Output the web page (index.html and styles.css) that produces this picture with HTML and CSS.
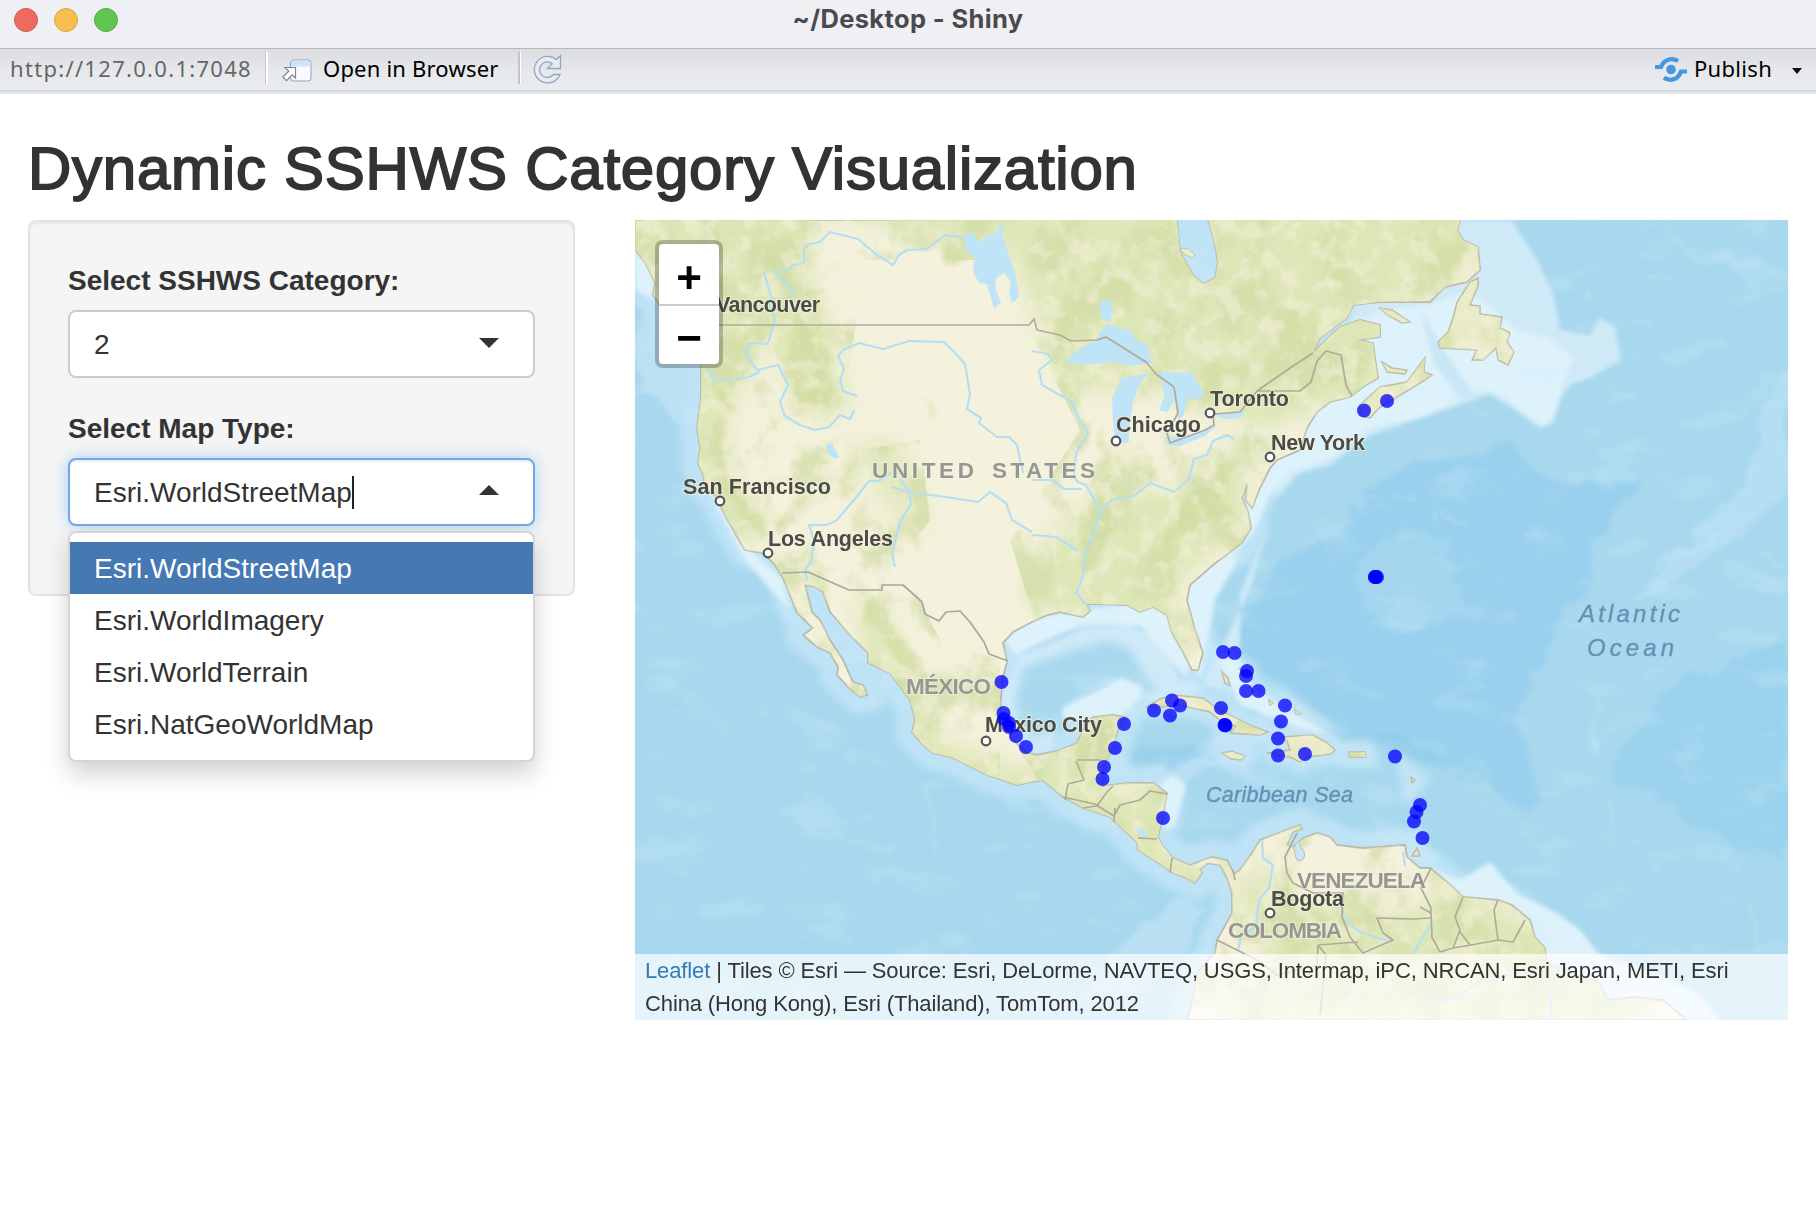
FILE: index.html
```html
<!DOCTYPE html>
<html lang="en">
<head>
<meta charset="utf-8">
<title>~/Desktop - Shiny</title>
<link rel="stylesheet" href="styles.css">
</head>
<body>
<header class="titlebar">
  <div class="lights"><span class="light red"></span><span class="light yellow"></span><span class="light green"></span></div>
  <div class="window-title">~/Desktop - Shiny</div>
</header>
<nav class="toolbar">
  <span class="url">http://127.0.0.1:7048</span>
  <span class="sep"></span>
  <svg class="open-icon" width="30" height="24" viewBox="0 0 30 24">
    <rect x="8.500" y="1" width="20.500" height="21" rx="3" fill="#f7faff" stroke="#8fa3b8"/>
    <path d="M9 7.500V4q0-2.500 2.500-2.500h14.500q2.500 0 2.500 2.500v3.500z" fill="#cfe3fb"/>
    <path d="M3 8.500h10.500v10.500l-3.200-3.200-5.800 5.800-3.600-3.600 5.800-5.800z" fill="#fff" stroke="#7c8794" stroke-width="1.200"/>
  </svg>
  <span class="open">Open in Browser</span>
  <span class="sep second"></span>
  <svg class="reload" width="30" height="31" viewBox="0 0 30 31">
    <path d="M28.500 1.500V14.500H15.500l4.800-4.800A7.800 7.800 0 1 0 21.500 20.500h6.500A13.300 13.300 0 1 1 24.300 5.500z" fill="#e4ecfa" stroke="#98a5b8" stroke-width="1.300"/>
  </svg>
  <svg class="publish-icon" width="32" height="26" viewBox="0 0 32 26">
    <circle cx="16" cy="12.500" r="4.800" fill="#4497e3"/>
    <path d="M0 10H6C9 2 17 .5 23 4M32 14.500H26C23 23.500 14 24.500 9 20.500" fill="none" stroke="#4497e3" stroke-width="4.200"/>
  </svg>
  <span class="publish">Publish</span>
  <span class="caret"></span>
</nav>

<main class="page">
  <h2>Dynamic SSHWS Category Visualization</h2>
  <div class="columns">
    <form class="well">
      <label>Select SSHWS Category:</label>
      <div class="select"><span class="value">2</span><span class="arrow down"></span></div>
      <label>Select Map Type:</label>
      <div class="select focus"><span class="value">Esri.WorldStreetMap</span><span class="cursor"></span><span class="arrow up"></span>
        <ul class="dropdown">
          <li class="active">Esri.WorldStreetMap</li>
          <li>Esri.WorldImagery</li>
          <li>Esri.WorldTerrain</li>
          <li>Esri.NatGeoWorldMap</li>
        </ul>
      </div>
    </form>

    <section class="map">
      <svg class="tiles" width="1153" height="800" viewBox="635 220 1153 800">
        <defs>
          <path id="land" d="M635 220V250L645 262 655 282 653 295 662 308 690 330 701 365 701 398 697 428 700 448 698 463 703 475 705 485 717 498 725 515 740 542 745 550 763 553 775 565 783 578 790 595 797 613 813 628 803 635 817 647 830 653 838 667 837 675 849 688 860 697 867 695 863 685 853 682 843 660 830 640 820 620 812 612 809 600 805 585 813 586 823 592 830 612 837 620 852 637 868 653 868 663 890 673 910 700 915 720 912 732 922 744 933 753 953 758 987 775 1017 785 1030 782 1043 780 1063 797 1083 808 1110 817 1124 830 1137 842 1138 850 1157 862 1173 873 1182 876 1195 883 1202 873 1200 869 1208 863 1220 865 1227 878 1232 893 1232 913 1217 940 1215 953 1197 973 1193 997 1187 1020H1687L1663 1000 1633 997 1607 1001 1600 983 1583 977 1547 963 1545 948 1535 937 1530 920 1512 905 1498 900 1463 897 1448 883 1430 868 1420 868 1407 857 1405 845 1363 848 1337 845 1330 837 1317 833 1303 838 1293 847 1287 845 1293 832 1302 829 1300 825 1287 830 1260 840 1252 853 1240 870 1234 874 1227 860 1212 857 1190 865 1173 858 1162 845 1158 837 1163 813 1167 793 1153 783 1130 783 1112 785 1102 787 1103 767 1113 747 1118 730 1125 717 1113 715 1093 717 1085 727 1077 743 1057 751 1037 755 1027 753 1013 740 1000 713 1002 680 1007 662 1003 643 1013 632 1030 623 1047 615 1060 612 1083 617 1090 611 1086 604 1097 604 1127 605 1140 612 1153 607 1167 615 1172 633 1182 650 1192 670 1198 670 1203 653 1195 630 1187 600 1190 585 1213 565 1230 552 1242 543 1251 528 1248 512 1242 498 1247 484 1246 500 1252 508 1260 488 1270 468 1277 460 1300 450 1307 428 1317 412 1330 402 1350 397 1363 387 1378 378 1375 358 1373 343 1357 340 1380 337 1380 325 1360 320 1340 327 1326 340 1313 353 1320 338 1347 318 1353 305 1380 302 1430 302 1445 287 1467 282 1480 270 1478 247 1463 240 1457 230 1460 220H1208L1213 235 1218 262 1215 278 1203 284 1193 275 1180 252 1177 220Z"/>
          <path id="isles" d="M1360 405L1380 387 1407 382 1418 367 1425 358 1424 372 1432 375 1420 383 1397 397 1380 407 1370 418 1362 416ZM1382 362l10 6 15 2-2 4-18-2zM1380 308l12 2 18 12-8 1-15-8zM1478 278L1478 286 1470 305 1480 306 1480 314 1502 317 1500 328 1510 333 1507 342 1514 352 1508 365 1498 360 1496 348 1483 360 1472 360 1477 350 1440 348 1438 342 1448 332 1453 318 1457 302 1470 282ZM1147 707L1160 699 1173 695 1203 698 1216 708 1230 715 1250 725 1268 732 1260 735 1230 733 1236 726 1222 722 1210 712 1180 705 1160 707ZM1283 737L1295 736 1313 735 1326 742 1335 750 1331 754 1307 757 1300 762 1290 757 1267 753 1290 750 1287 741ZM1222 753l10-2 13 5-4 4-10-1zM1349 752h16l1 5h-17zM1222 672l6 6 2 8-5-3zM1411 777l4 3-3 3zM1417 848l3 8-8 0zM1240 669l5 2-1 3zM1269 700l4 3-3 2zM1295 710l5 4-4 0z"/>
          <clipPath id="landclip"><use href="#land"/><use href="#isles"/></clipPath>
          <filter id="b30" x="-20%" y="-20%" width="140%" height="140%"><feGaussianBlur stdDeviation="11"/></filter>
          <filter id="b5" x="-10%" y="-10%" width="120%" height="120%"><feGaussianBlur stdDeviation="4"/></filter>
          <filter id="b1" x="-10%" y="-10%" width="120%" height="120%"><feGaussianBlur stdDeviation="2.200"/></filter>
          <filter id="shore" x="-10%" y="-10%" width="120%" height="120%">
            <feTurbulence type="fractalNoise" baseFrequency=".03" numOctaves="4" seed="5" result="t"/>
            <feDisplacementMap in="SourceGraphic" in2="t" scale="26" xChannelSelector="R" yChannelSelector="G" result="d"/>
            <feGaussianBlur in="d" stdDeviation="2"/>
          </filter>
          <filter id="relief" x="0" y="0" width="100%" height="100%" color-interpolation-filters="sRGB">
            <feTurbulence type="fractalNoise" baseFrequency=".022 .018" numOctaves="6" seed="8"/>
            <feColorMatrix values="0 0 0 0 .82  0 0 0 0 .865  0 0 0 0 .65  5 0 0 0 -2.350" result="n"/>
            <feComposite in="n" in2="SourceAlpha" operator="in"/>
          </filter>
          <filter id="cream" x="0" y="0" width="100%" height="100%" color-interpolation-filters="sRGB">
            <feTurbulence type="fractalNoise" baseFrequency=".05" numOctaves="6" seed="31"/>
            <feColorMatrix values="0 0 0 0 .955  0 0 0 0 .94  0 0 0 0 .85  0 4.500 0 0 -2.100" result="n"/>
            <feComposite in="n" in2="SourceAlpha" operator="in"/>
          </filter>
          <filter id="swell" x="0" y="0" width="100%" height="100%" color-interpolation-filters="sRGB">
            <feTurbulence type="fractalNoise" baseFrequency=".014 .03" numOctaves="4" seed="12"/>
            <feColorMatrix values="0 0 0 0 .82  0 0 0 0 .93  0 0 0 0 .98  0 4 0 0 -2.250"/>
          </filter>
        </defs>

        <!-- sea floor -->
        <rect x="635" y="220" width="1153" height="800" fill="#a8d8ee"/>
        <g filter="url(#shore)">
          <path fill="#99d0ed" d="M1240 650L1248 605 1285 560 1340 530 1380 480 1440 455 1480 452 1508 440 1525 465 1575 478 1600 488 1645 486 1610 520 1590 570 1560 620 1530 680 1520 740 1540 800 1530 810 1460 780 1410 745 1340 730 1290 700Z"/>
          <path fill="#9bd2ed" d="M1660 690L1710 670 1788 640V860L1700 830 1650 790 1610 780Z"/>
          <path fill="#a3d6ee" d="M1355 560l50-35 40 20 20 60-50 30-50-20z"/>
          <path fill="#b9dff2" d="M1788 370L1760 420 1740 490 1690 540 1630 600 1660 590 1730 540 1788 500Z" opacity=".85"/>
          <path fill="#b9dff2" d="M1660 220L1690 250 1788 268V280L1750 270 1690 262Z" opacity=".5"/>
          <path fill="#bce1f2" d="M635 300L690 330 690 430 660 400 635 400Z"/>
          <path fill="#c5e5f5" d="M1170 900L1120 950 1080 990 1100 1010 1180 960 1210 910ZM1150 760L1090 790 1180 790 1160 830 1200 770 1250 750Z" opacity=".6"/>
          <path fill="#8fcbea" d="M1290 730L1400 732 1440 760 1425 765 1380 742 1300 742ZM1140 752L1260 738 1220 752 1120 780ZM1020 800L1080 820 1120 840 1070 815Z" opacity=".6"/>
        </g>
        <use href="#land" fill="none" stroke="#bfe3f6" stroke-width="34" stroke-linejoin="round" filter="url(#b5)"/>
        <use href="#isles" fill="none" stroke="#c9e8f8" stroke-width="22" filter="url(#b5)" opacity=".8"/>
        <g filter="url(#b1)">
          <path fill="#cfe9f7" d="M1460 220H1512L1540 265 1555 300 1560 330 1590 335 1600 318 1615 328 1621 360 1590 378 1570 385 1560 400 1553 424 1540 428 1515 410 1490 394 1460 405 1415 420 1370 435 1330 465 1298 474 1275 500 1262 540 1240 595 1240 645 1222 690 1180 680 1160 640 1130 625 1080 630 1020 655 1000 700 1010 740 1030 755 1050 752 1060 712 1100 685 1130 680 1140 700 1170 700 1200 690 1250 590 1290 440 1360 300Z"/>
          <path fill="#def2fb" d="M1350 330L1380 310 1430 305 1470 290 1520 332 1550 338 1573 358 1562 385 1555 415 1542 426 1500 395 1480 390 1420 418 1370 428 1330 460 1295 470 1270 495 1255 530 1230 560 1210 590 1200 650 1185 675 1165 655 1140 625 1080 625 1015 655 1005 640 1030 618 1160 600 1250 500 1300 420ZM1160 785L1172 775 1186 785 1175 825 1165 830ZM1182 620L1200 570 1240 555 1215 600 1200 680zM1430 868L1460 880 1490 862 1518 895 1555 912 1580 930 1600 955 1660 975 1700 995 1720 1020H1680L1540 970ZM1240 705L1215 650 1240 660 1255 690 1330 735 1300 728ZM635 250L655 270V300L635 290ZM697 440L715 505 745 560 790 610 783 580 745 545z"/>
          <path fill="#bfe1f4" d="M1420 310L1450 360 1475 395 1460 398 1435 365z" opacity=".7"/>
        </g>
        <g filter="url(#b5)">
          <path fill="#a8d8ee" d="M1016 700L1024 668 1060 655 1105 640 1130 650 1146 678 1160 690 1140 692 1110 678 1075 702 1055 728 1032 738 1018 722Z"/>
        </g>
        <path fill="#def2fb" filter="url(#b1)" d="M1064 722L1062 708 1090 694 1122 678 1142 686 1140 698 1122 716z"/>
        <rect x="635" y="220" width="1153" height="800" filter="url(#swell)" opacity=".28"/>
        <!-- ridges on the ocean floor -->
        <g fill="none" stroke="#d3ecf8" stroke-width="2" opacity=".55" filter="url(#shore)">
          <path d="M1520 530l12 8 4-10 8 10M1536 543l15 2 12-6M1445 510l10 12 8-5M1390 492l20 8 4-6M1755 548l14 10M1770 565h18M1640 278l18-5 10 8M1580 300l6-14 4 12M1450 772l28 8M1530 790l35 4M1598 690l-6 60M1604 800l8 30M850 845l45 4M925 780l10 70M1690 1000l20 20M1745 905l20 60M1430 500l8 20M1650 570l30-20 40-15"/>
        </g>

        <!-- land -->
        <use href="#land" fill="#f4f2dd" stroke="#b9b9a8" stroke-width="1.800"/>
        <use href="#isles" fill="#e9ebc8" stroke="#bdbca4" stroke-width="1.500"/>
        <g clip-path="url(#landclip)">
          <g filter="url(#b30)" fill="#dde6b6">
            <path d="M635 210H820L805 270 830 330 850 410 810 420 760 330 740 380 725 450 760 520 770 550 740 540 690 460 690 350 635 270Z"/>
            <path d="M830 205H1480V270L1390 300 1380 390 1290 420 1240 450 1190 490 1100 500 1075 580 1160 590 1230 540 1250 450 1290 440 1160 390 1080 390 1040 330 1010 250 830 215Z"/>
            <path d="M1060 520L1100 500 1230 470 1260 500 1170 590 1200 650 1180 650 1060 610 1020 600Z"/>
            <path d="M845 445L900 440 930 530 900 525z" opacity=".8"/>
            <path d="M850 600L880 610 915 680 920 730 1020 770 1060 750 1080 800 1010 800 900 760ZM1080 720h40v60l60 20v60l60 30-20 30-60-40-80-50z"/>
            <path d="M1260 850L1240 900 1270 950 1220 1020H1650L1540 930 1430 870 1430 910 1340 905 1290 930Z"/>
          </g>
          <g fill="#cdd99c" opacity=".6" filter="url(#shore)">
            <path d="M715 375l14 3-8 85 45 60 0 20-36-45-20-45zM795 310l25 15 20 80-40 10-15-60zM865 600l15 0 25 50 18 30 0 15-30-35zM760 250l30-5 10 50-20 5zM945 245l20 10-12 10-10-5zM1100 425l20 80-20 50-20 20zM1170 520l60-60 10 0-40 70-40 20zM905 520l14 25-6 8zM1085 730h25l-5 40-25 5zM1295 850l-14 50 12 40zM850 540l40 8-10 8zM925 395l12 16-4 4z"/>
          </g>
          <path filter="url(#relief)" opacity=".75" d="M635 220H830L860 300 840 420 860 450 920 440 930 520 900 560 940 640 1000 660V780H900L700 540 635 300ZM830 220H1490V440H1290V680H1150L1040 640 1010 540 1080 430 1030 330 1010 260H830ZM990 700H1700V1020H1180ZM1440 280h90v90h-90z"/>
          <path filter="url(#cream)" opacity=".55" d="M635 220H870V700H700ZM1020 220H1520V1020H1680L1180 1020 1000 800 880 760V600L1060 620Z"/>
        </g>

        <!-- lakes -->
        <path fill="#bfe3f7" d="M964 239l8-9 5 10 6 2 3-7 9-1 6-10 3 1-2 10 6 17 7 20 4 25-7 6-3-10 2-11-7-9-8 5-1 10 6 15-7 5-7-24-8-1-6-11 2-15-8-6zM1065 363Q1080 345 1096 341L1100 332 1108 324 1119 328 1130 330 1138 342 1147 344 1150 358 1153 363 1130 366 1110 362 1095 364ZM1112 398L1122 378 1150 373 1140 382 1133 402 1130 425 1128 443 1115 442 1113 420ZM1158 372L1192 373 1205 395 1195 400 1187 398 1184 415 1178 421 1175 400 1167 412 1159 410 1165 395ZM1165 437L1190 436 1217 425 1205 436 1180 446 1168 445ZM1213 415L1238 411 1245 410 1241 418 1225 419ZM1100 302q5-4 11 0l2 10-4 10-9-5zM826 445l6-2 7 14-4 2-7-6zM1136 827l12 6-2 5-8-4z"/>
        <path fill="#c7e6f6" stroke="#bcbcaa" d="M1294 848q4-12 7 0 5 4 3 10-5 6-8 0z"/>
        <path fill="#ecefcd" stroke="#c2c0a8" d="M1180 248l8 1 7 6-3 3-8-4z"/>
        <!-- rivers -->
        <g fill="none" stroke="#b5def3" stroke-width="2.200" stroke-linejoin="round">
          <path d="M780 271l10-3 4-3 10-2 0-14 5-5 11-2 10-10 28 7 19 16 16 10 6-10 8-5 20-1 18-14 20 3M794 298l-8-14-12-14M764 272l4 15 7 20M768 300l7 20-6 20-2 4-16-1-6 7 7 14 7 8-10 5-26 4-10-2-3-8-4-1M758 370l20-5 10 20-8 17 5 14 15 9 15 5 14-3 11-12 10 4 4-9M857 396l-14-5-3-10 4-12-6-13 5-6 16-7 24 6 26-8 35 1 12 12 9 10 5 30-3 15 14 9-2 5 18 14 12 0 8 8 6 28M807 580l-2-10 6-8 3-20-2-8-3-9 15 0 3 0 10-5 22-26 10-13 10 0 12-8M895 567l-3-13 8-32 11-18-2-12-18-5M900 479l10 13 42 6 26 4 12-10 16 11 6 17 20 12"/>
          <path d="M1032 351l16 3 4 6-13 10 3 15 30 17 6 15 10 16-8 13-4 7-2 24 4 5 8 3 15 27-16 42-2 22-7 17 11 12M1032 480l20 0 12 9h18M1100 511l12-11 22-4 16-13 24 9 15-13 5-20 13-4 6-14 14-6 7 4M1032 535l24 2 22 14M1262 840l1 18 10 7-4 23-10 12-3 26-15 10-3 15M1340 900l5 20 15 12 28 9M1403 852l2 14M1430 925l-18 30M1245 1000l28-30 12-2M1430 1003l25-5 30-20 38-4 20-8M1552 1020l-2-30 10-25"/>
        </g>
        <!-- borders -->
        <g fill="none" stroke="#b1aa9b" stroke-width="1.700" stroke-linejoin="round">
          <path d="M715 325H1029L1034 319 1037 330 1060 335 1071 341 1097 340 1106 337 1146 362 1156 374 1174 387 1178 413 1167 433 1170 443 1205 430 1214 425 1213 414 1240 412 1257 391H1300L1311 382 1317 361 1326 351 1341 355 1346 385 1352 396M1257 391L1290 368 1313 353"/>
          <path d="M782 573L808 572 849 590H882V585H903L922 602 925 614 939 621 946 612 960 611 970 622 984 642 989 654 1008 661" stroke="#a8a79f"/>
          <path d="M1077 760l24 0M1065 800l3-16 16-4-8-19M1063 797l36 8M1083 808l14-2 10-14 6-6M1098 806l16 10 6-11 20-5 10-9 17 3M1115 808l-1 14M1138 838l19 1M1170 873l2-15M1233 870l2 10M1297 833l-12 24 2 16 6 10 20 10 30 0-1 24 8 20 13 16 30-13-10-7-6-15 36 1 17-1M1217 940l40 20 20 15 40-10 1-20 40-3M1318 945l8 10-6 60M1431 868l-10 20 10 20 0 5M1420 907l11 6 1 24 8 15 13-4 7-18-5-13 8-20M1498 900l-4 10 4 30 15 2 12-22M1453 948l18-3 27-5M1460 932l10 13"/>
        </g>

        <!-- labels -->
        <g class="city">
          <text x="716" y="311.500" textLength="104">Vancouver</text>
          <text x="683" y="494" textLength="148">San Francisco</text>
          <text x="768" y="546" textLength="125">Los Angeles</text>
          <text x="1116" y="432" textLength="85">Chicago</text>
          <text x="1210" y="406" textLength="79">Toronto</text>
          <text x="1271" y="450" textLength="94">New York</text>
          <text x="985" y="732" textLength="117">Mexico City</text>
          <text x="1271" y="906" textLength="73">Bogota</text>
        </g>
        <g class="country">
          <text x="872" y="478" textLength="102">UNITED</text>
          <text x="992" y="478" textLength="103">STATES</text>
          <text x="906" y="693.500" textLength="85">MÉXICO</text>
          <text x="1297" y="888" textLength="129">VENEZUELA</text>
          <text x="1228" y="938" textLength="114">COLOMBIA</text>
        </g>
        <g class="water">
          <text class="small" x="1206" y="802" textLength="147">Caribbean Sea</text>
          <text x="1579" y="621.500" textLength="101">Atlantic</text>
          <text x="1587" y="655.500" textLength="87">Ocean</text>
        </g>
        <g fill="#fff" stroke="#555" stroke-width="2.200">
          <circle cx="720" cy="501" r="4.300"/><circle cx="768" cy="553" r="4.300"/><circle cx="1116" cy="441" r="4.300"/><circle cx="1210" cy="413" r="4.300"/><circle cx="1270" cy="457" r="4.300"/><circle cx="986" cy="741" r="4.300"/><circle cx="1270" cy="913" r="4.300"/>
        </g>
        <!-- storm positions -->
        <g fill="#00f" fill-opacity=".76">
          <circle cx="1364" cy="410.500" r="7"/><circle cx="1387" cy="401" r="7"/>
          <circle cx="1375" cy="577" r="7"/><circle cx="1377" cy="577" r="7"/><circle cx="1375" cy="577" r="7"/><circle cx="1376" cy="577" r="7"/>
          <circle cx="1001.500" cy="682" r="7"/><circle cx="1003.500" cy="713" r="7"/><circle cx="1004" cy="719" r="7"/><circle cx="1009" cy="723" r="7"/><circle cx="1009" cy="727" r="7"/><circle cx="1016" cy="736" r="7"/><circle cx="1026" cy="747" r="7"/>
          <circle cx="1124" cy="724" r="7"/><circle cx="1115" cy="748" r="7"/><circle cx="1104" cy="767" r="7"/><circle cx="1102.500" cy="779" r="7"/><circle cx="1163" cy="818" r="7"/>
          <circle cx="1154" cy="710.500" r="7"/><circle cx="1172" cy="700.500" r="7"/><circle cx="1180" cy="705.500" r="7"/><circle cx="1170" cy="715.500" r="7"/><circle cx="1221" cy="708" r="7"/>
          <circle cx="1224.500" cy="725" r="7"/><circle cx="1225.500" cy="725.500" r="7"/><circle cx="1225" cy="725" r="7"/>
          <circle cx="1223" cy="652" r="7"/><circle cx="1234.500" cy="653" r="7"/><circle cx="1247" cy="671" r="7"/><circle cx="1246" cy="676" r="7"/><circle cx="1246" cy="691" r="7"/><circle cx="1258.500" cy="691" r="7"/>
          <circle cx="1285" cy="705.500" r="7"/><circle cx="1281" cy="721.500" r="7"/><circle cx="1278" cy="738.500" r="7"/><circle cx="1278" cy="755.500" r="7"/><circle cx="1305" cy="754" r="7"/>
          <circle cx="1395" cy="756.500" r="7"/><circle cx="1420" cy="805" r="7"/><circle cx="1416.500" cy="812" r="7"/><circle cx="1414" cy="821.500" r="7"/><circle cx="1422.500" cy="838" r="7"/>
        </g>
      </svg>
      <div class="zoom"><span>+</span><span>−</span></div>
      <div class="attribution"><a>Leaflet</a> | Tiles © Esri — Source: Esri, DeLorme, NAVTEQ, USGS, Intermap, iPC, NRCAN, Esri Japan, METI, Esri<br>China (Hong Kong), Esri (Thailand), TomTom, 2012</div>
    </section>
  </div>
</main>
</body>
</html>
```
FILE: styles.css
```css
* { box-sizing: border-box; }
body {
  margin: 0;
  width: 1816px;
  height: 1210px;
  overflow: hidden;
  background: #fff;
  color: #333;
  font: 28px/40px "Liberation Sans", Arial, sans-serif;
}
.titlebar {
  display: grid;
  grid-template-columns: 200px 1fr 200px;
  height: 48px;
  background: #eff0f4;
}
.lights { display: flex; gap: 16px; padding: 8px 0 0 14px; }
.light { width: 24px; height: 24px; border-radius: 50%; border: 1px solid; }
.red { background: #ed6a5e; border-color: #d8574c; }
.yellow { background: #f5bf4f; border-color: #dba53b; }
.green { background: #61c554; border-color: #50ad40; }
.window-title {
  text-align: center;
  font: bold 25.500px/38px Inter, sans-serif;
  letter-spacing: .35px;
  color: #4a4a4c;
}
.toolbar {
  display: flex;
  align-items: center;
  height: 46px;
  padding: 0 10px 3px 10px;
  border-top: 1px solid #b4b7ba;
  background: linear-gradient(#dcdde0, #e7e8eb 50%, #ebecef);
  box-shadow: inset 0 -2px #e8ebed, inset 0 -4px #d5dade;
  font: 22px/40px "Noto Sans", sans-serif;
  color: #000;
  white-space: nowrap;
}
.url { width: 241px; color: #666; letter-spacing: 1.3px; }
.sep { width: 3px; height: 32px; margin: -4px 0 0 14px; background: linear-gradient(90deg, #c3c5c8 50%, #fff 50%); }
.open-icon { margin: 2px 0 0 14px; }
.open { width: 176px; margin-left: 11px; letter-spacing: .2px; }
.sep.second { margin-left: 19px; }
.reload { margin: -2px 0 0 11px; }
.publish-icon { margin: 0 7px 0 auto; }
.open, .publish, .url { margin-top: -5px; }
.publish { width: 79px; letter-spacing: .3px; }
.caret { margin: 2px 4px 0 19px; border: 5px solid transparent; border-top: 6px solid #111; border-bottom: 0; }
.page { padding: 40px 28px 0; }
h2 {
  margin: 0;
  height: 86px;
  font-size: 60px;
  font-weight: 400;
  line-height: 70px;
  letter-spacing: .75px;
  white-space: nowrap;
  -webkit-text-stroke: 1.8px #333;
}
.columns { display: flex; align-items: flex-start; gap: 60px; }
.well {
  width: 547px;
  height: 376px;
  padding: 38px 38px 0;
  background: #f5f5f5;
  border: 2px solid #e3e3e3;
  border-radius: 8px;
  box-shadow: inset 0 2px 2px rgba(0,0,0,.05);
}
label { display: block; height: 50px; line-height: 42px; font-weight: bold; white-space: nowrap; }
.select {
  position: relative;
  display: flex;
  align-items: center;
  width: 467px;
  height: 68px;
  margin: 0 0 30px;
  padding: 0 34px 0 24px;
  border: 2px solid #ccc;
  border-radius: 8px;
  background: #fff;
}
.focus { border-color: #72a8e6; box-shadow: inset 0 2px 2px rgba(0,0,0,.07), 0 0 16px rgba(102,175,233,.55); }
.value { padding-top: 2px; white-space: nowrap; }
.cursor { width: 2px; height: 33px; background: #222; }
.arrow { margin-left: auto; border: 10px solid transparent; }
.down { border-top-color: #333; border-bottom: 0; margin-top: -2px; }
.up { border-bottom-color: #333; border-top: 0; margin-top: -4px; }
.dropdown {
  position: absolute;
  z-index: 2;
  top: 71px;
  left: -2px;
  width: 467px;
  height: 231px;
  margin: 0;
  padding: 9px 0;
  list-style: none;
  background: #fff;
  border: 2px solid #d5d5d5;
  border-radius: 8px;
  box-shadow: 0 12px 24px rgba(0,0,0,.18);
}
.dropdown li { height: 52px; padding-left: 24px; line-height: 54px; }
.dropdown .active { background: #4678b2; color: #fff; }
.map { position: relative; width: 1153px; height: 800px; overflow: hidden; }
.tiles { display: block; }
.tiles text { font-family: "Liberation Sans", Arial, sans-serif; }
.city { font-size: 21.500px; font-weight: bold; fill: #4b4b48; paint-order: stroke; stroke: #f5f3df; stroke-width: 2px; stroke-opacity: .6; }
.country { font-size: 22.500px; font-weight: bold; fill: #969693; paint-order: stroke; stroke: #f5f3df; stroke-width: 2px; stroke-opacity: .6; }
.water { font-size: 24px; font-style: italic; fill: #6a8fb6; stroke: #6a8fb6; stroke-width: .4px; }
.water .small { font-size: 21.500px; }
.zoom {
  position: absolute;
  top: 20px;
  left: 20px;
  border: 4px solid rgba(0,0,0,.24);
  border-radius: 8px;
  background: #fff;
  background-clip: padding-box;
}
.zoom span { display: block; width: 60px; height: 60px; font: bold 44px/68px "Liberation Sans", sans-serif; color: #000; text-align: center; }
.zoom span + span { border-top: 2px solid #ccc; line-height: 64px; }
.attribution {
  position: absolute;
  left: 0;
  right: 0;
  bottom: 0;
  height: 66px;
  padding-left: 10px;
  background: rgba(255,255,255,.7);
  font-size: 22px;
  line-height: 33px;
  letter-spacing: -.12px;
  white-space: nowrap;
}
.attribution a { color: #337ab7; }
```
